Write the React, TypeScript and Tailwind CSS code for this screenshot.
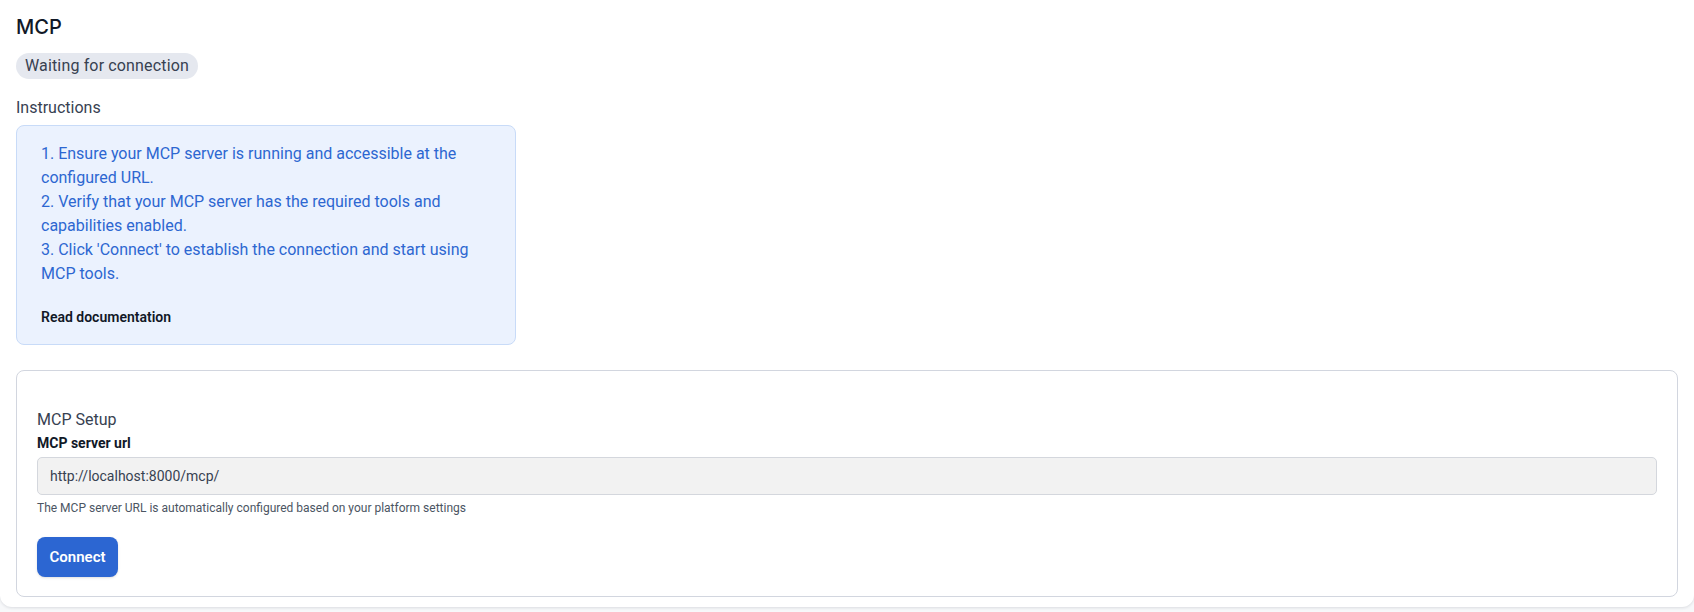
import { useState } from 'react';

export default function App() {
    const [url] = useState('http://localhost:8000/mcp/');

    const steps = [
        '1. Ensure your MCP server is running and accessible at the configured URL.',
        '2. Verify that your MCP server has the required tools and capabilities enabled.',
        "3. Click 'Connect' to establish the connection and start using MCP tools.",
    ];

    return (
        <div className="min-h-screen bg-[#f7f8fa] font-['Roboto',sans-serif]">
            <div className="bg-white rounded-b-xl shadow-[0_1px_3px_rgba(15,23,42,0.12)] px-4 pt-[13px] pb-[10px]">
                {/* Header */}
                <h1 className="text-[20px] leading-7 font-medium text-[#111827] font-['Inter',sans-serif]">MCP</h1>
                <div className="mt-[12px]">
                    <span className="inline-flex items-center h-[26px] px-[9px] rounded-full bg-[#e5e8ef] text-[16px] text-[#374151] tracking-[0.15px]">
                        Waiting for connection
                    </span>
                </div>

                {/* Instructions */}
                <div className="mt-[17px] text-[16px] leading-6 text-[#374151]">Instructions</div>
                <div className="mt-[5px] w-[500px] rounded-lg border border-[#c8dbf8] bg-[#ebf2fe] pl-6 pr-10 pt-[16px] pb-[17px]">
                    <div className="text-[16px] leading-6 text-[#2d67d1]">
                        {steps.map(s => (
                            <div key={s}>{s}</div>
                        ))}
                    </div>
                    <a className="block mt-[21px] text-[14px] leading-5 font-semibold text-[#111827] cursor-pointer">Read documentation</a>
                </div>

                {/* Setup card */}
                <div className="mt-[25px] rounded-lg border border-[#d2d6df] px-5 pt-[37px] pb-[19px]">
                    <div className="text-[16px] leading-6 text-[#374151]">MCP Setup</div>
                    <label className="block mt-[1px] text-[14px] leading-5 font-bold text-[#111827]">MCP server url</label>
                    <input
                        type="text"
                        readOnly
                        value={url}
                        className="mt-[4px] block w-full h-[38px] rounded-[5px] border border-[#d4d7dd] bg-[#f2f2f2] px-3 text-[14px] text-[#374151] outline-none"
                    />
                    <p className="mt-[3px] text-[12px] leading-5 text-[#4b5563]">
                        The MCP server URL is automatically configured based on your platform settings
                    </p>
                    <button className="mt-[19px] h-10 w-[81px] rounded-lg bg-[#2c66d2] text-[15px] font-semibold text-white shadow-sm">
                        Connect
                    </button>
                </div>
            </div>
        </div>
    );
}
